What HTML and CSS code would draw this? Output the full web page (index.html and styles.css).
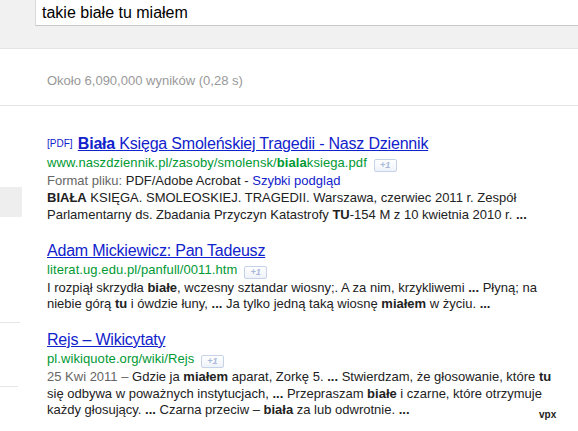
FILE: index.html
```html
<!DOCTYPE html>
<html lang="pl">
<head>
<meta charset="utf-8">
<link rel="stylesheet" href="styles.css">
</head>
<body>
<div class="header">
  <div class="search">takie białe tu miałem</div>
</div>
<div class="stats">Około 6,090,000 wyników (0,28 s)</div>
<div class="layout">
  <div class="side">
    <div class="side-sel"></div>
    <div class="side-sep first"></div>
    <div class="side-sep second"></div>
  </div>
  <div class="results">
    <div class="result">
      <div class="title"><span class="ft">[PDF]</span> <a class="link" href="#"><b>Biała</b> Księga Smoleńskiej Tragedii - Nasz Dziennik</a></div>
      <div class="url">www.naszdziennik.pl/zasoby/smolensk/<b>biala</b>ksiega.pdf <span class="plus">+1</span></div>
      <div class="meta"><span class="gray">Format pliku:</span> PDF/Adobe Acrobat - <a class="blue" href="#">Szybki podgląd</a></div>
      <div class="snippet"><b>BIAŁA</b> KSIĘGA. SMOLEOSKIEJ. TRAGEDII. Warszawa, czerwiec 2011 r. Zespół<br>Parlamentarny ds. Zbadania Przyczyn Katastrofy <b>TU</b>-154 M z 10 kwietnia 2010 r. <b>...</b></div>
    </div>
    <div class="result">
      <div class="title"><a class="link" href="#">Adam Mickiewicz: Pan Tadeusz</a></div>
      <div class="url">literat.ug.edu.pl/panfull/0011.htm <span class="plus">+1</span></div>
      <div class="snippet">I rozpiął skrzydła <b>białe</b>, wczesny sztandar wiosny;. A za nim, krzykliwemi <b>...</b> Płyną; na<br>niebie górą <b>tu</b> i ówdzie łuny, <b>...</b> Ja tylko jedną taką wiosnę <b>miałem</b> w życiu. <b>...</b></div>
    </div>
    <div class="result">
      <div class="title"><a class="link" href="#">Rejs – Wikicytaty</a></div>
      <div class="url">pl.wikiquote.org/wiki/Rejs <span class="plus">+1</span></div>
      <div class="snippet"><span class="gray">25 Kwi 2011 –</span> Gdzie ja <b>miałem</b> aparat, Zorkę 5. <b>...</b> Stwierdzam, że głosowanie, które <b>tu</b><br>się odbywa w poważnych instytucjach, <b>...</b> Przepraszam <b>białe</b> i czarne, które otrzymuje<br>każdy głosujący. <b>...</b> Czarna przeciw – <b>biała</b> za lub odwrotnie. <b>...</b></div>
    </div>
  </div>
</div>
<div class="mark">vpx</div>
</body>
</html>
```

FILE: styles.css
```css
html, body {
  margin: 0;
  padding: 0;
  background: #fff;
  font-family: "Liberation Sans", Arial, sans-serif;
  color: #222;
  overflow: hidden;
}
body {
  width: 578px;
  height: 431px;
  position: relative;
}
.header {
  height: 48px;
  background: #f1f1f1;
  border-bottom: 1px solid #e5e5e5;
}
.search {
  margin-left: 35px;
  height: 26px;
  box-sizing: border-box;
  background: #fff;
  border-left: 1px solid #d9d9d9;
  border-bottom: 1px solid #c8c8c8;
  padding-left: 6px;
  font-size: 16px;
  line-height: 26px;
  color: #000;
}
.stats {
  height: 57px;
  box-sizing: border-box;
  padding: 24px 0 0 47px;
  font-size: 13px;
  line-height: 16px;
  color: #999;
  border-bottom: 1px solid #e5e5e5;
}
.layout {
  display: flex;
  gap: 25px;
}
.side {
  width: 22px;
  flex: none;
}
.side-sel {
  margin-top: 81px;
  height: 30px;
  background: #eeeeee;
}
.side-sep {
  height: 1px;
  background: #e5e5e5;
  width: 20px;
}
.side-sep.first { margin-top: 105px; }
.side-sep.second { margin-top: 63px; width: 18px; }
.results {
  padding-top: 28px;
}
.result + .result {
  margin-top: 17.5px;
}
.title {
  font-size: 16px;
  line-height: 20px;
  white-space: nowrap;
  letter-spacing: -0.2px;
}
.ft {
  font-size: 10px;
  color: #1122cc;
  vertical-align: 2px;
  letter-spacing: 0;
  margin-right: 1px;
}
.link {
  color: #1122cc;
  text-decoration: underline;
}
.url {
  font-size: 13px;
  line-height: 17px;
  color: #009933;
  white-space: nowrap;
  letter-spacing: 0.08px;
}
.plus {
  display: inline-block;
  width: 21px;
  height: 11px;
  border: 1px solid #c6d2e8;
  border-radius: 2px;
  background: linear-gradient(#ffffff, #eef2f9);
  font-size: 9px;
  line-height: 11px;
  font-weight: bold;
  font-style: italic;
  color: #a8b8d8;
  text-align: center;
  vertical-align: -1px;
  margin-left: 3px;
  letter-spacing: 0;
}
.meta {
  font-size: 13px;
  line-height: 17px;
  color: #222;
  white-space: nowrap;
}
.gray { color: #666; }
.blue { color: #1122cc; text-decoration: none; }
.snippet {
  margin-top: 1px;
  font-size: 13px;
  line-height: 16.5px;
  color: #222;
  white-space: nowrap;
}
.mark {
  position: absolute;
  left: 539px;
  top: 409px;
  font-size: 10px;
  font-weight: bold;
  color: #222;
}
```
